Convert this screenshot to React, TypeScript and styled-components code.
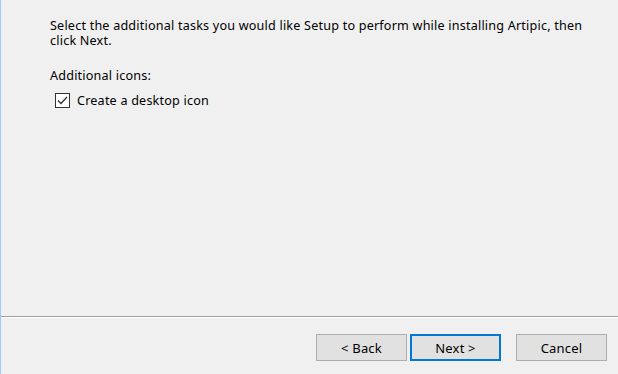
import React from 'react';
import styled, { createGlobalStyle } from 'styled-components';

const GlobalStyle = createGlobalStyle`
  html, body {
    margin: 0;
    padding: 0;
    background: #f0f0f0;
  }
  #root {
    width: 618px;
    height: 374px;
  }
`;

const Window = styled.div`
  width: 618px;
  height: 374px;
  box-sizing: border-box;
  background: #f0f0f0;
  border-left: 1px solid #9dcaf0;
  display: flex;
  flex-direction: column;
  font-family: 'Noto Sans', 'Open Sans', sans-serif;
  font-size: 12.6px;
  letter-spacing: 0.2px;
  color: #000;
`;

const Body = styled.div`
  flex: 1;
  padding: 18px 30px 0 49px;
`;

const Intro = styled.p`
  margin: 0;
  line-height: 15px;
  width: 535px;
`;

const GroupLabel = styled.div`
  margin-top: 20px;
  line-height: 15px;
`;

const CheckRow = styled.label`
  display: flex;
  align-items: center;
  gap: 7px;
  margin-top: 10px;
  margin-left: 5px;
  line-height: 15px;
`;

const Box = styled.span`
  width: 15px;
  height: 15px;
  box-sizing: border-box;
  border: 1px solid #333;
  background: #fff;
  display: flex;
  align-items: center;
  justify-content: center;
`;

const Footer = styled.div`
  border-top: 1px solid #a0a0a0;
  box-shadow: inset 0 1px 0 #fff;
  height: 58px;
  box-sizing: border-box;
  padding: 17px 11px 0 0;
  display: flex;
  justify-content: flex-end;
  align-items: flex-start;
`;

const Button = styled.button<{ $primary?: boolean; $gap?: number }>`
  width: 91px;
  height: 27px;
  box-sizing: border-box;
  margin-left: ${p => p.$gap ?? 0}px;
  background: #e1e1e1;
  border: ${p => (p.$primary ? '2px solid #0078d7' : '1px solid #adadad')};
  font-family: inherit;
  font-size: 13px;
  letter-spacing: 0.2px;
  color: #000;
  padding: 0;
`;

export default function App() {
  return (
    <>
      <GlobalStyle />
      <Window>
        <Body>
          <Intro>
            Select the additional tasks you would like Setup to perform while installing Artipic, then
            click Next.
          </Intro>
          <GroupLabel>Additional icons:</GroupLabel>
          <CheckRow>
            <Box>
              <svg width="11" height="9" viewBox="0 0 11 9">
                <path d="M1 4.5 L4 7.5 L10 1" fill="none" stroke="#333" strokeWidth="1.3" />
              </svg>
            </Box>
            Create a desktop icon
          </CheckRow>
        </Body>
        <Footer>
          <Button>&lt; Back</Button>
          <Button $primary $gap={3}>Next &gt;</Button>
          <Button $gap={15}>Cancel</Button>
        </Footer>
      </Window>
    </>
  );
}
